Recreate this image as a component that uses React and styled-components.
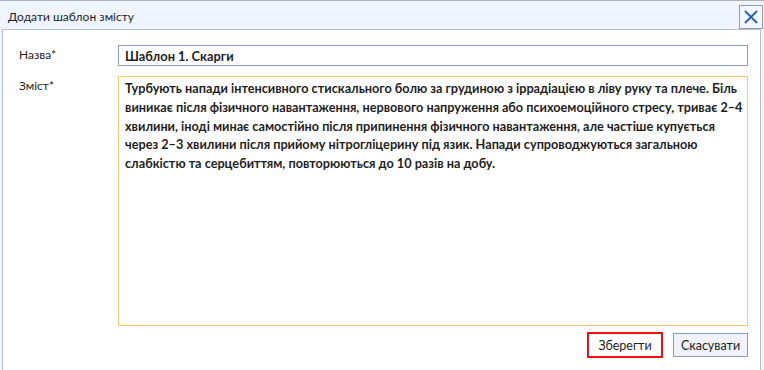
import React from 'react'
import styled, { createGlobalStyle } from 'styled-components'

const GlobalStyle = createGlobalStyle`
  html, body {
    margin: 0;
    padding: 0;
    background: #ffffff;
  }
  body {
    font-family: Lato, "Open Sans", sans-serif;
    color: #1e1e1e;
  }
`

const lines = [
  'Турбують напади інтенсивного стискального болю за грудиною з іррадіацією в ліву руку та плече. Біль',
  'виникає після фізичного навантаження, нервового напруження або психоемоційного стресу, триває 2–4',
  'хвилини, іноді минає самостійно після припинення фізичного навантаження, але частіше купується',
  'через 2–3 хвилини після прийому нітрогліцерину під язик. Напади супроводжуються загальною',
  'слабкістю та серцебиттям, повторюються до 10 разів на добу.'
]

const Dialog = () => (
  <Window>
    <Header>
      <Title>Додати шаблон змісту</Title>
      <CloseButton aria-label="Закрити">
        <svg width="16" height="16" viewBox="0 0 16 16">
          <path d="M2 2 L14 14 M14 2 L2 14" stroke="#1d5fbf" strokeWidth="1.8" fill="none" />
        </svg>
      </CloseButton>
    </Header>
    <Body>
      <Row>
        <Label>Назва*</Label>
        <NameInput readOnly value="Шаблон 1. Скарги" />
      </Row>
      <Row>
        <Label>Зміст*</Label>
        <ContentBox role="textbox">
          {lines.map((l, i) => (
            <Line key={i}>{l}</Line>
          ))}
        </ContentBox>
      </Row>
      <Footer>
        <Button $primary>Зберегти</Button>
        <Button>Скасувати</Button>
      </Footer>
    </Body>
  </Window>
)

const Window = styled.div`
  width: 764px;
  height: 370px;
  box-sizing: border-box;
  border-top: 1px solid #b4b4b4;
  display: flex;
  flex-direction: column;
  background: #eef5fe;
`

const Header = styled.div`
  height: 28px;
  display: flex;
  align-items: center;
  justify-content: space-between;
  padding: 0 1px 0 8px;
`

const Title = styled.div`
  font-size: 12px;
  color: #1e1e1e;
  padding-top: 2px;
`

const CloseButton = styled.button`
  width: 24px;
  height: 24px;
  margin-top: 3px;
  padding: 0;
  box-sizing: border-box;
  border: 1px solid #8b9bbb;
  background: #f3f7fd;
  display: flex;
  align-items: center;
  justify-content: center;
`

const Body = styled.div`
  flex: 1;
  margin: 0 3px 0 2px;
  background: #ffffff;
  border: 1px solid #b8c0cc;
  border-bottom: none;
  padding: 15px 12px 0 16px;
  display: flex;
  flex-direction: column;
`

const Row = styled.div`
  display: flex;
  align-items: flex-start;
  margin-bottom: 10px;
`

const Label = styled.div`
  width: 99px;
  font-size: 12px;
  color: #1e1e1e;
  padding-top: 2px;
`

const NameInput = styled.input`
  width: 630px;
  height: 21px;
  box-sizing: border-box;
  border: 1px solid #8b9bbb;
  padding: 0 6px;
  font-family: Lato, sans-serif;
  font-weight: 700;
  font-size: 12.8px;
  color: #1e1e1e;
  outline: none;
`

const ContentBox = styled.div`
  width: 630px;
  height: 250px;
  box-sizing: border-box;
  border: 1px solid #f5c86e;
  padding: 2px 6px;
  font-weight: 700;
  font-size: 12.7px;
  line-height: 18.8px;
  color: #1e1e1e;
`

const Line = styled.div`
  white-space: nowrap;
`

const Footer = styled.div`
  display: flex;
  justify-content: flex-end;
  gap: 10px;
  margin-top: -4px;
`

const Button = styled.button`
  width: ${p => (p.$primary ? '76px' : '75px')};
  height: ${p => (p.$primary ? '26px' : '24px')};
  margin-top: ${p => (p.$primary ? '0' : '1px')};
  box-sizing: border-box;
  border: ${p => (p.$primary ? '2px solid #ee1111' : '1px solid #8b9bbb')};
  background: ${p => (p.$primary ? '#ffffff' : '#f0f3fb')};
  font-family: Lato, sans-serif;
  font-size: 12.5px;
  color: #1e1e1e;
  padding: 0;
`

const App = () => (
  <>
    <GlobalStyle />
    <Dialog />
  </>
)

export default App
